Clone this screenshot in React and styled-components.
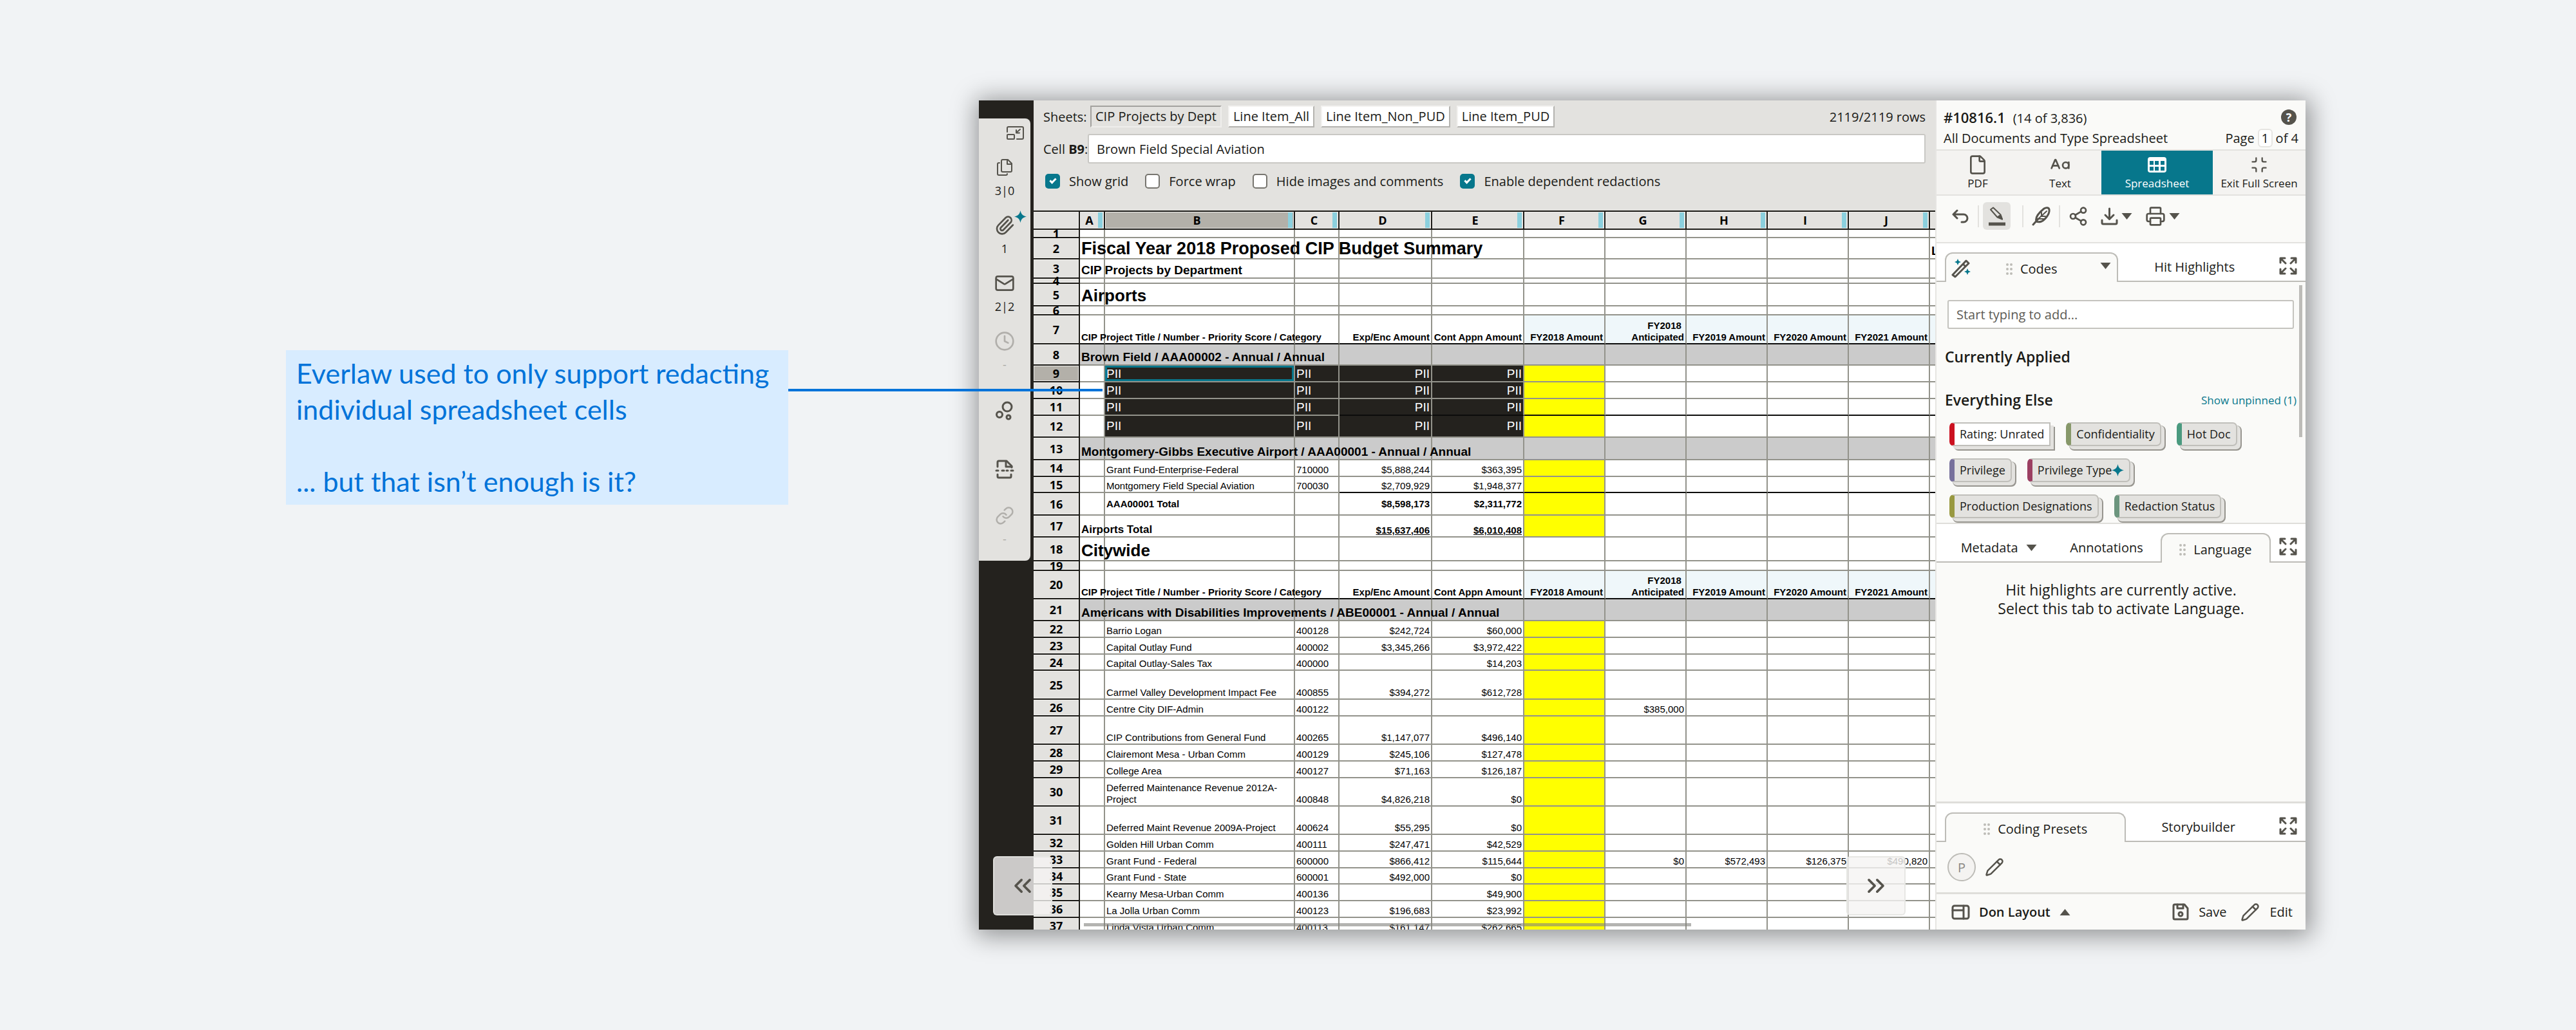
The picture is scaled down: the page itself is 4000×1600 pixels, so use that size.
import React from 'react';
import styled, { createGlobalStyle, css } from 'styled-components';
import {
    CaseSensitive,
    ChevronsLeft,
    ChevronsRight,
    Clock,
    File,
    Link,
    Mail,
    Minimize,
    Paperclip,
    Pencil,
    Printer,
    Share2,
} from 'lucide-react';

const ui = '"Open Sans", "Noto Sans", sans-serif';
const sheetFont = '"Liberation Sans", Arial, sans-serif';

const ink = '#1a1a17';
const iconGrey = '#55534c';
const teal = '#07778c';
const stone = '#e3e2df';
const stoneDark = '#b3b0a9';
const soot = '#24221e';
const paper = '#fafaf8';
const gridLine = '#93938b';

const GlobalStyle = createGlobalStyle`
    *, *::before, *::after {
        box-sizing: border-box;
    }

    body {
        margin: 0;
        background: #f1f3f5;
        color: ${ink};
        font-family: ${ui};
        font-size: 20px;
    }

    button, input {
        font: inherit;
        color: inherit;
    }

    button {
        padding: 0;
        border: 0;
        background: none;
    }
`;

const Page = styled.div`
    display: flex;
    align-items: stretch;
    gap: 296px;
    height: 100vh;
    padding: 156px 420px 156px 444px;
`;

/* ---------- callout ---------- */

const Callout = styled.aside`
    position: relative;
    flex: 0 0 780px;
    align-self: flex-start;
    margin-top: 388px;
    padding: 8px 16px;
    background: #d8ecff;
    color: #0073d9;
    font-family: Lato, sans-serif;
    font-size: 43px;
    font-weight: 400;
    line-height: 56px;

    p {
        margin: 0 0 56px;
    }

    p:last-of-type {
        margin: 0;
    }
`;

const Connector = styled.span`
    position: absolute;
    z-index: 5;
    top: 60px;
    left: 100%;
    width: 488px;
    height: 4px;
    background: #0073d9;
`;

/* ---------- window ---------- */

const Window = styled.main`
    position: relative;
    flex: 1;
    min-width: 0;
    display: flex;
    background: ${soot};
    box-shadow: 2px 4px 36px 6px rgba(0, 0, 0, 0.4);
`;

const Rail = styled.nav`
    flex: 0 0 85px;
    padding-top: 28px;
`;

const RailPanel = styled.div`
    width: 80px;
    height: 687px;
    padding-top: 11px;
    display: flex;
    flex-direction: column;
    background: ${stone};
    border-radius: 0 8px 8px 0;
    color: ${iconGrey};
`;

const RailCollapse = styled.button`
    display: flex;
    align-self: flex-end;
    height: 45px;
    padding-right: 9px;
    color: inherit;
`;

const RailItem = styled.button`
    position: relative;
    display: flex;
    flex-direction: column;
    align-items: center;
    height: 91px;
    padding-top: ${p => (p.$bare ? '18px' : 0)};
    color: inherit;
    font-size: 18px;
    line-height: 32px;

    > svg {
        height: 40px;
        opacity: ${p => (p.$off ? 0.35 : 1)};
    }

    > span {
        color: ${p => (p.$off ? '#a9a8a3' : ink)};
    }
`;

const RailSpark = styled.i`
    position: absolute;
    top: -3px;
    right: 6px;
    display: flex;
`;

/* ---------- sheet ---------- */

const Sheet = styled.section`
    position: relative;
    flex: 1;
    min-width: 0;
    display: flex;
    flex-direction: column;
    overflow: hidden;
    background: #fff;
`;

const SheetHead = styled.header`
    padding: 8px 15px 33px;
    background: ${stone};
`;

const SheetTabs = styled.div`
    display: flex;
    align-items: center;
    gap: 10px;
    height: 34px;
`;

const SheetsLabel = styled.span`
    width: 63px;
`;

const SheetTab = styled.button`
    height: 34px;
    padding: 0 6px;
    border: 2px solid;
    border-color: ${p => (p.$active ? '#a3a29e #efeeec #efeeec #a3a29e' : '#f3f2f0 #b4b3af #b4b3af #f3f2f0')};
    background: ${p => (p.$active ? stone : '#fff')};
    line-height: 28px;
    white-space: nowrap;
`;

const RowCount = styled.span`
    margin-left: auto;
`;

const CellBar = styled.label`
    display: flex;
    align-items: center;
    margin-top: 10px;

    > span {
        width: 69px;
        white-space: nowrap;
    }

    input {
        flex: 1;
        min-width: 0;
        height: 46px;
        padding: 0 12px;
        border: 2px solid #c9c8c4;
        border-radius: 3px;
        background: #fff;
    }
`;

const Options = styled.div`
    display: flex;
    gap: 26px;
    margin-top: 15px;
    margin-bottom: 1px;
    padding-left: 3px;
`;

const Option = styled.label`
    display: flex;
    align-items: center;
    gap: 14px;
    height: 24px;
    white-space: nowrap;

    input {
        appearance: none;
        display: grid;
        place-content: center;
        width: 23px;
        height: 23px;
        margin: 0;
        border: 2px solid #77756f;
        border-radius: 5px;
        background: #fff;
    }

    input:checked {
        border-color: ${teal};
        background: ${teal};
    }

    input:checked::after {
        content: '';
        width: 6px;
        height: 10px;
        margin-bottom: 3px;
        border: solid #fff;
        border-width: 0 3px 3px 0;
        transform: rotate(45deg);
    }
`;

const Grid = styled.div`
    flex: 1;
    min-height: 0;
    overflow: hidden;
`;

const Table = styled.table`
    width: 1518px;
    table-layout: fixed;
    border-collapse: separate;
    border-spacing: 0;
    font-family: ${sheetFont};
    font-size: 15px;
    line-height: 18px;
    color: #000;
`;

const ColHead = styled.th`
    position: relative;
    height: 30px;
    padding: 0 8px 0 0;
    border: solid #1c1b17;
    border-width: 2px 2px 2px 0;
    background: ${p => (p.$active ? stoneDark : stone)};
    box-shadow: inset 0 0 0 1px #efeeec;
    font-family: ${ui};
    font-size: 18px;
    font-weight: 700;
`;

const Grip = styled.span`
    position: absolute;
    top: 1px;
    right: 2px;
    bottom: 1px;
    width: 7px;
    background: #8bd0de;
`;

const RowHead = styled.th`
    padding: 0;
    border: solid #1c1b17;
    border-width: 0 2px 2px 0;
    background: ${p => (p.$active ? stoneDark : stone)};
    box-shadow: inset 0 0 0 1px #efeeec;
    font-family: ${ui};
    font-size: 18px;
    font-weight: 700;
`;

const RowNumber = styled.div`
    display: flex;
    align-items: center;
    justify-content: center;
    height: ${p => p.$h - 2}px;
`;

const fills = {
    head: '#eff7fa',
    group: '#cbcbcb',
    yellow: '#ffff00',
    redacted: soot,
};

const Cell = styled.td`
    padding: 0;
    border: solid ${gridLine};
    border-width: 0 2px 2px 0;
    border-bottom-color: ${p => (p.$rule ? '#0c0c0b' : gridLine)};
    background: ${p => fills[p.$fill] || '#fff'};
    ${p => p.$selected && css`
        box-shadow: inset 0 0 0 3px ${teal};
    `}
`;

const looks = {
    banner: css`font-size: 27px; font-weight: 700; line-height: 30px;`,
    title: css`font-size: 26px; font-weight: 700; line-height: 30px;`,
    sub: css`font-size: 19px; font-weight: 700; line-height: 22px;`,
    total: css`font-size: 17px; font-weight: 700; line-height: 20px;`,
    bold: css`font-weight: 700;`,
    sum: css`font-weight: 700; text-decoration: underline;`,
    pii: css`font-size: 19px; line-height: 22px; color: #fff;`,
};

const CellText = styled.div`
    display: flex;
    align-items: ${p => (p.$middle ? 'center' : 'flex-end')};
    justify-content: ${p => (p.$right ? 'flex-end' : 'flex-start')};
    height: ${p => p.$h - 2}px;
    padding: 0 2px;
    text-align: ${p => (p.$right ? 'right' : 'left')};
    white-space: pre;
    ${p => looks[p.$look]}
`;

const ScrollThumbX = styled.div`
    position: absolute;
    left: 78px;
    bottom: 5px;
    width: 943px;
    height: 5px;
    background: rgba(130, 130, 125, 0.6);
`;

const Pager = styled.button`
    position: absolute;
    z-index: 2;
    bottom: 22px;
    display: flex;
    align-items: center;
    justify-content: center;
    width: 92px;
    height: 92px;
    border: 2px solid rgba(228, 227, 224, 0.8);
    border-radius: 6px;
    background: rgba(245, 244, 242, 0.8);
    color: ${iconGrey};
    ${p => (p.$side === 'left' ? 'left: 22px;' : 'right: 46px;')}
`;

/* ---------- review panel ---------- */

const Review = styled.aside`
    flex: 0 0 575px;
    display: flex;
    flex-direction: column;
    border-left: 2px solid #e6e5e2;
    background: ${paper};
`;

const DocHead = styled.header`
    display: flex;
    flex-direction: column;
    gap: 4px;
    height: 78px;
    padding: 11px 11px 0;
    border-bottom: 2px solid #e3e2df;
`;

const DocLine = styled.div`
    display: flex;
    align-items: center;
    justify-content: space-between;
    height: 29px;
    white-space: nowrap;
`;

const DocTitle = styled.h1`
    margin: 0;
    font-size: 20px;
    font-weight: 400;

    b {
        margin-right: 12px;
        font-size: 22px;
        font-weight: 600;
    }
`;

const Help = styled.button`
    width: 24px;
    height: 24px;
    margin-right: 3px;
    border-radius: 50%;
    background: ${iconGrey};
    color: #fff;
    font-size: 18px;
    font-weight: 700;
    line-height: 24px;
`;

const PageBox = styled.label`
    display: flex;
    align-items: center;
    gap: 5px;

    input {
        width: 23px;
        height: 29px;
        padding: 0;
        border: 2px solid #e6e5e2;
        border-radius: 6px;
        background: #fff;
        text-align: center;
    }
`;

const ViewTabs = styled.div`
    display: grid;
    grid-template-columns: 128fr 128fr 173fr 144fr;
    height: 70px;
    border-bottom: 2px solid #e3e2df;
    background: #f4f3f1;
`;

const ViewTab = styled.button`
    display: flex;
    flex-direction: column;
    align-items: center;
    justify-content: center;
    gap: 1px;
    background: ${p => (p.$active ? teal : 'none')};
    color: ${p => (p.$active ? '#fff' : ink)};
    font-size: 17px;
    line-height: 24px;
    white-space: nowrap;

    svg {
        height: 32px;
        color: ${p => (p.$active ? '#fff' : iconGrey)};
    }
`;

const Tools = styled.div`
    display: flex;
    align-items: center;
    height: 74px;
    padding: 0 15px 9px;
    border-bottom: 2px solid #e3e2df;
    color: ${iconGrey};
`;

const Tool = styled.button`
    display: flex;
    align-items: center;
    justify-content: center;
    gap: 5px;
    height: 43px;
    width: ${p => (p.$menu ? '68px' : '43px')};
    margin-left: ${p => (p.$menu ? '4px' : 0)};
    border-radius: 6px;
    background: ${p => (p.$active ? stone : 'none')};
    color: inherit;
`;

const Divider = styled.i`
    width: 2px;
    height: 34px;
    margin: 0 6px 0 ${p => (p.$wide ? '18px' : '6px')};
    background: ${stone};
`;

const TabBand = styled.div`
    display: flex;
    align-items: flex-end;
    height: 60px;
    padding-left: 13px;
    border-bottom: 2px solid #bdbcb7;
    background: #fff;
`;

const Tab = styled.button`
    position: relative;
    display: flex;
    align-items: center;
    justify-content: center;
    gap: 12px;
    flex: ${p => p.$grow || 1} 1 0;
    height: 46px;
    padding-top: 3px;
    white-space: nowrap;
    ${p => p.$active && css`
        margin-bottom: -2px;
        border: 2px solid #bdbcb7;
        border-bottom: 0;
        border-radius: 12px 12px 0 0;
        background: ${paper};
    `}
`;

const TabLead = styled.span`
    position: absolute;
    left: 8px;
    top: 8px;
    display: flex;
`;

const TabMenu = styled.span`
    position: absolute;
    right: 9px;
    top: 14px;
    display: flex;
`;

const Expand = styled.button`
    display: flex;
    align-items: center;
    justify-content: center;
    flex: 0 0 54px;
    height: 46px;
    color: ${iconGrey};
`;

const Codes = styled.section`
    position: relative;
    padding: 28px 14px 7px 13px;
    border-bottom: 2px solid #dfdeda;
`;

const CodeSearch = styled.input`
    display: block;
    width: calc(100% - 8px);
    height: 45px;
    margin-left: 4px;
    padding: 0 12px;
    border: 2px solid #c4c3be;
    border-radius: 3px;
    background: #fff;

    &::placeholder {
        color: #5d5b55;
        opacity: 1;
    }
`;

const SectionRow = styled.div`
    display: flex;
    align-items: center;
    justify-content: space-between;
    margin-top: ${p => p.$gap}px;

    h2 {
        margin: 0;
        font-size: 23px;
        font-weight: 600;
        line-height: 30px;
    }

    a {
        color: ${teal};
        font-size: 17px;
        text-decoration: none;
    }
`;

const Tags = styled.div`
    display: flex;
    flex-wrap: wrap;
    gap: 19px 24px;
    margin-top: 20px;
    padding: 0 60px 0 7px;
`;

const Tag = styled.button`
    position: relative;
    height: 37px;
    padding: 0 8px;
    border: 2px solid #c0bfba;
    border-left: 8px solid ${p => p.$color};
    border-radius: ${p => (p.$square ? '7px 0 0 7px' : '7px')};
    background: ${p => (p.$square ? '#fff' : stone)};
    box-shadow: ${p => (p.$square ? '5px 5px 0 0 #e3e2df, 7px 7px 0 0 #97958f' : '5px 5px 0 0 #e3e2df, 6px 6px 0 1px #97958f')};
    font-size: 18px;
    line-height: 33px;
    white-space: nowrap;

    svg {
        vertical-align: -3px;
    }
`;

const ScrollThumbY = styled.div`
    position: absolute;
    top: 5px;
    right: 5px;
    width: 5px;
    height: 236px;
    background: #bdbcb8;
`;

const Notice = styled.p`
    flex: 1;
    margin: 0;
    padding-top: 28px;
    border-bottom: 3px solid #dfdeda;
    font-size: 23px;
    line-height: 29px;
    text-align: center;
`;

const Presets = styled.div`
    display: flex;
    align-items: center;
    gap: 14px;
    height: 81px;
    padding: 0 17px;
    border-bottom: 3px solid #dfdeda;
    color: ${iconGrey};
`;

const Preset = styled.button`
    width: 44px;
    height: 44px;
    border: 2px solid #bdbcb7;
    border-radius: 50%;
    background: #f4f3f1;
    color: #8a8882;
`;

const IconButton = styled.button`
    display: flex;
    color: ${iconGrey};
`;

const Footer = styled.footer`
    display: flex;
    align-items: center;
    gap: 22px;
    height: 55px;
    padding: 0 20px 0 23px;
`;

const FootButton = styled.button`
    display: flex;
    align-items: center;
    gap: ${p => (p.$strong ? '14px' : '15px')};
    margin-right: ${p => (p.$strong ? 'auto' : 0)};
    font-weight: ${p => (p.$strong ? 600 : 400)};

    svg {
        color: ${iconGrey};
    }
`;

/* ---------- icons ---------- */

const Svg = ({ w = 28, h = w, box = '0 0 28 28', sw = 3, children }) => (
    <svg width={w} height={h} viewBox={box} fill="none" stroke="currentColor" strokeWidth={sw} strokeLinecap="round" strokeLinejoin="round" aria-hidden="true">
        {children}
    </svg>
);

const Spark = ({ size = 19 }) => (
    <svg width={size} height={size} viewBox="0 0 20 20" fill={teal} aria-hidden="true">
        <path d="M10 0c1.200 6 4 8.800 10 10-6 1.200-8.800 4-10 10-1.200-6-4-8.800-10-10 6-1.200 8.800-4 10-10z" />
    </svg>
);

const Caret = ({ up }) => (
    <svg width="17" height="10" viewBox="0 0 17 10" fill={iconGrey} aria-hidden="true">
        <path d={up ? 'M8.500 0 16.500 10H.5z' : 'M8.500 10 .5 0h16z'} />
    </svg>
);

const Dots = () => (
    <svg width="10" height="18" viewBox="0 0 10 18" fill="#bdbcb7" aria-hidden="true">
        {[2, 9, 16].map(y => (
            <React.Fragment key={y}>
                <circle cx="2" cy={y} r="2" />
                <circle cx="8" cy={y} r="2" />
            </React.Fragment>
        ))}
    </svg>
);

const ExpandIcon = () => (
    <Svg w={28}>
        <path d="M2 9V2h7M2 2l8 8M19 2h7v7M26 2l-8 8M2 19v7h7M2 26l8-8M26 19v7h-7M26 26l-8-8" />
    </Svg>
);

const CollapseIcon = () => (
    <Svg w={29} h={23} box="0 0 29 23" sw={2}>
        <path d="M2 10V4a2 2 0 0 1 2-2h21a2 2 0 0 1 2 2v15a2 2 0 0 1-2 2h-8" />
        <rect x="2" y="14" width="11" height="7" rx="1" />
        <path d="M22 6l-6 5M16 7v4.500h5" />
    </Svg>
);

const CopyIcon = () => (
    <Svg w={26} h={28} box="0 0 26 28" sw={2}>
        <path d="M10 2h8l6 6v11a2 2 0 0 1-2 2H10a2 2 0 0 1-2-2V4a2 2 0 0 1 2-2z" />
        <path d="M17 2v7h7" />
        <path d="M5 7H4a2 2 0 0 0-2 2v15a2 2 0 0 0 2 2h11a2 2 0 0 0 2-2" />
    </Svg>
);

const NodesIcon = () => (
    <Svg w={28} h={30} box="0 0 28 30" sw={3}>
        <circle cx="18" cy="9" r="7" />
        <circle cx="6" cy="21" r="4.500" />
        <circle cx="20" cy="25" r="3" />
    </Svg>
);

const SplitIcon = () => (
    <Svg w={30} h={30} box="0 0 30 30" sw={3}>
        <path d="M4 11V4a2 2 0 0 1 2-2h12l8 8v2" />
        <path d="M17 3v8h9" />
        <path d="M2 17h3M11 17h3M18 17h2M25 17h3" />
        <path d="M4 23v3a2 2 0 0 0 2 2h17a2 2 0 0 0 2-2v-3" />
    </Svg>
);

const TableIcon = () => (
    <svg width="29" height="24" viewBox="0 0 29 24" aria-hidden="true">
        <rect width="29" height="24" rx="4" fill="#fff" />
        {[3, 11, 20].map(x => (
            <React.Fragment key={x}>
                <rect x={x} y="6" width="6" height="6" fill={teal} />
                <rect x={x} y="15" width="6" height="6" fill={teal} />
            </React.Fragment>
        ))}
    </svg>
);

const UndoIcon = () => (
    <Svg w={26} h={22} box="0 0 26 22">
        <path d="M8 2 2 8l6 6M2 8h16a6 6 0 0 1 0 12h-3" />
    </Svg>
);

const HighlightIcon = () => (
    <Svg w={30} h={30} box="0 0 30 30" sw={2}>
        <path d="M5 4.500 9 1.500l11.500 11 2.500 7-7.500-3z" />
        <path d="M16.500 15.500l4-2.500 2.500 6.500z" fill="currentColor" />
        <path d="M2 27h26" strokeWidth="5" strokeLinecap="butt" />
    </Svg>
);

const NibIcon = () => (
    <Svg w={30} h={30} box="0 0 30 30" sw={3}>
        <path d="M2 28l8-9M7 23c-2-6 2-12 12-20 3-2 8-2 8 2 1 6-6 15-12 18-3 1-6 1-8 0z" />
        <path d="M9 20 23 7M14 15h7M11 19h7M15 14V9" strokeWidth="2" />
    </Svg>
);

const DownloadIcon = () => (
    <Svg w={27} h={28} box="0 0 27 28">
        <path d="M13.500 2v16M7 12l6.500 6.500L20 12M2 20v4a2 2 0 0 0 2 2h19a2 2 0 0 0 2-2v-4" />
    </Svg>
);

const WandIcon = () => (
    <svg width="30" height="30" viewBox="0 0 30 30" fill="none" stroke={iconGrey} strokeWidth="3" strokeLinejoin="round" aria-hidden="true">
        <path d="M2 25 23 3l4 4L6 28z" />
        <path d="M18 8l4 4" />
        <path d="M10 0l1.500 3.500L15 5l-3.500 1.500L10 10 8.500 6.500 5 5l3.500-1.500zM25 15l1.500 3.500L30 20l-3.500 1.500L25 25l-1.500-3.500L20 20l3.500-1.500z" fill={teal} stroke="none" />
    </svg>
);

const LayoutIcon = () => (
    <Svg w={29} h={24} box="0 0 29 24" sw={3}>
        <rect x="2" y="2" width="25" height="20" rx="3" />
        <path d="M2 9h17M19 2v20" />
    </Svg>
);

const SaveIcon = () => (
    <Svg w={26} h={27} box="0 0 26 27" sw={3}>
        <path d="M4 2h15l5 6v15a2 2 0 0 1-2 2H4a2 2 0 0 1-2-2V4a2 2 0 0 1 2-2z" />
        <path d="M8 2v6h9V2" />
        <circle cx="13" cy="17" r="3" />
    </Svg>
);

/* ---------- data ---------- */

const columns = [
    ['A', 39], ['B', 295], ['C', 69], ['D', 144], ['E', 143], ['F', 126],
    ['G', 126], ['H', 126], ['I', 126], ['J', 126], ['K', 126],
];

const amounts = {
    A: 'CIP Project Title / Number - Priority Score / Category',
    D: 'Exp/Enc Amount',
    E: 'Cont Appn Amount',
    F: 'FY2018 Amount',
    G: 'FY2018 \nAnticipated',
    H: 'FY2019 Amount',
    I: 'FY2020 Amount',
    J: 'FY2021 Amount',
};

const pii = { B: 'PII', C: 'PII', D: 'PII', E: 'PII' };

const item = (h, B, C, D, E, rest) => ({ h, kind: 'item', cells: { B, C, D, E, ...rest } });

const rows = [
    { h: 13, cells: {} },
    { h: 33, look: 'banner', cells: { A: 'Fiscal Year 2018 Proposed CIP Budget Summary', K: 'L' } },
    { h: 30, look: 'sub', cells: { A: 'CIP Projects by Department' } },
    { h: 8, cells: {} },
    { h: 35, look: 'title', cells: { A: 'Airports' } },
    { h: 14, cells: {} },
    { h: 45, kind: 'head', look: 'bold', rule: 'A', cells: amounts },
    { h: 33, kind: 'group', look: 'sub', cells: { A: 'Brown Field / AAA00002 - Annual / Annual' } },
    { h: 26, kind: 'redacted', look: 'pii', cells: pii },
    { h: 26, kind: 'redacted', look: 'pii', cells: pii },
    { h: 26, kind: 'redacted', look: 'pii', rule: 'D', cells: pii },
    { h: 34, kind: 'redacted', look: 'pii', middle: true, cells: pii },
    { h: 35, kind: 'group', look: 'sub', cells: { A: 'Montgomery-Gibbs Executive Airport / AAA00001 - Annual / Annual' } },
    item(26, 'Grant Fund-Enterprise-Federal', '710000', '$5,888,244', '$363,395'),
    { ...item(25, 'Montgomery Field Special Aviation', '700030', '$2,709,929', '$1,948,377'), rule: 'D' },
    { h: 35, kind: 'item', look: 'bold', middle: true, cells: { B: 'AAA00001 Total', D: '$8,598,173', E: '$2,311,772' } },
    { h: 34, kind: 'item', look: 'sum', cells: { A: 'Airports Total', D: '$15,637,406', E: '$6,010,408' } },
    { h: 37, look: 'title', cells: { A: 'Citywide' } },
    { h: 15, cells: {} },
    { h: 44, kind: 'head', look: 'bold', rule: 'A', cells: amounts },
    { h: 34, kind: 'group', look: 'sub', cells: { A: 'Americans with Disabilities Improvements / ABE00001 - Annual / Annual' } },
    item(26, 'Barrio Logan', '400128', '$242,724', '$60,000'),
    item(26, 'Capital Outlay Fund', '400002', '$3,345,266', '$3,972,422'),
    item(25, 'Capital Outlay-Sales Tax', '400000', '', '$14,203'),
    item(45, 'Carmel Valley Development Impact Fee', '400855', '$394,272', '$612,728'),
    item(26, 'Centre City DIF-Admin', '400122', '', '', { G: '$385,000' }),
    item(44, 'CIP Contributions from General Fund', '400265', '$1,147,077', '$496,140'),
    item(26, 'Clairemont Mesa - Urban Comm', '400129', '$245,106', '$127,478'),
    item(26, 'College Area', '400127', '$71,163', '$126,187'),
    item(44, 'Deferred Maintenance Revenue 2012A-\nProject', '400848', '$4,826,218', '$0'),
    item(44, 'Deferred Maint Revenue 2009A-Project', '400624', '$55,295', '$0'),
    item(26, 'Golden Hill Urban Comm', '400111', '$247,471', '$42,529'),
    item(26, 'Grant Fund - Federal', '600000', '$866,412', '$115,644', { G: '$0', H: '$572,493', I: '$126,375', J: '$490,820' }),
    item(25, 'Grant Fund - State', '600001', '$492,000', '$0'),
    item(26, 'Kearny Mesa-Urban Comm', '400136', '', '$49,900'),
    item(26, 'La Jolla Urban Comm', '400123', '$196,683', '$23,992'),
    item(26, 'Linda Vista Urban Comm', '400113', '$161,147', '$262,665'),
];

const fillFor = (kind, col) => {
    if (kind === 'group') return 'group';
    if (kind === 'head' && col >= 'F') return 'head';
    if (kind === 'redacted' && col >= 'B' && col <= 'E') return 'redacted';
    if ((kind === 'redacted' || kind === 'item') && col === 'F') return 'yellow';
    return 'plain';
};

const lookFor = (row, col) => {
    if (row.look === 'sum' && col === 'A') return 'total';
    if (row.look === 'banner' && col === 'K') return 'sub';
    return row.look;
};

const sheets = ['CIP Projects by Dept', 'Line Item_All', 'Line Item_Non_PUD', 'Line Item_PUD'];

const options = [
    ['Show grid', true],
    ['Force wrap', false],
    ['Hide images and comments', false],
    ['Enable dependent redactions', true],
];

const tags = [
    ['Rating: Unrated', '#cb1120'],
    ['Confidentiality', '#87986a'],
    ['Hot Doc', '#4a9a7f'],
    ['Privilege', '#77709c'],
    ['Privilege Type', '#9b3f62'],
    ['Production Designations', '#989840'],
    ['Redaction Status', '#6c957e'],
];

/* ---------- page parts ---------- */

const SideRail = () => (
    <Rail aria-label="Document context">
        <RailPanel>
            <RailCollapse aria-label="Collapse"><CollapseIcon /></RailCollapse>
            <RailItem><CopyIcon /><span>3|0</span></RailItem>
            <RailItem>
                <Paperclip size={32} />
                <RailSpark><Spark /></RailSpark>
                <span>1</span>
            </RailItem>
            <RailItem><Mail size={32} /><span>2|2</span></RailItem>
            <RailItem $off><Clock size={32} /><span>-</span></RailItem>
            <RailItem $bare aria-label="Related"><NodesIcon /></RailItem>
            <RailItem $bare aria-label="Split"><SplitIcon /></RailItem>
            <RailItem $off><Link size={30} /><span>-</span></RailItem>
        </RailPanel>
    </Rail>
);

const SheetTable = () => (
    <Table>
        <colgroup>
            <col style={{ width: 72 }} />
            {columns.map(([name, width]) => <col key={name} style={{ width }} />)}
        </colgroup>
        <thead>
            <tr>
                <ColHead />
                {columns.map(([name]) => (
                    <ColHead key={name} scope="col" $active={name === 'B'}>
                        {name !== 'K' && name}
                        <Grip />
                    </ColHead>
                ))}
            </tr>
        </thead>
        <tbody>
            {rows.map((row, i) => (
                <tr key={i}>
                    <RowHead scope="row" $active={i === 8}>
                        <RowNumber $h={row.h}>{i + 1}</RowNumber>
                    </RowHead>
                    {columns.map(([col]) => (
                        <Cell
                            key={col}
                            $fill={fillFor(row.kind, col)}
                            $rule={row.rule && col >= row.rule}
                            $selected={i === 8 && col === 'B'}
                        >
                            <CellText
                                $h={row.h}
                                $look={lookFor(row, col)}
                                $middle={row.middle}
                                $right={col >= 'D' && row.look !== 'banner'}
                            >
                                {row.cells[col]}
                            </CellText>
                        </Cell>
                    ))}
                </tr>
            ))}
        </tbody>
    </Table>
);

const SheetView = () => (
    <Sheet>
        <SheetHead>
            <SheetTabs>
                <SheetsLabel>Sheets:</SheetsLabel>
                {sheets.map((name, i) => <SheetTab key={name} $active={i === 0}>{name}</SheetTab>)}
                <RowCount>2119/2119 rows</RowCount>
            </SheetTabs>
            <CellBar>
                <span>Cell <b>B9</b>:</span>
                <input type="text" defaultValue="Brown Field Special Aviation" />
            </CellBar>
            <Options>
                {options.map(([label, checked]) => (
                    <Option key={label}>
                        <input type="checkbox" defaultChecked={checked} />
                        {label}
                    </Option>
                ))}
            </Options>
        </SheetHead>
        <Grid>
            <SheetTable />
        </Grid>
        <ScrollThumbX />
        <Pager $side="right" aria-label="Next document"><ChevronsRight size={44} /></Pager>
    </Sheet>
);

const ReviewPanel = () => (
    <Review>
        <DocHead>
            <DocLine>
                <DocTitle><b>#10816.1</b>(14 of 3,836)</DocTitle>
                <Help aria-label="Help">?</Help>
            </DocLine>
            <DocLine>
                <span>All Documents and Type Spreadsheet</span>
                <PageBox>
                    Page
                    <input type="text" defaultValue="1" />
                    of 4
                </PageBox>
            </DocLine>
        </DocHead>
        <ViewTabs>
            <ViewTab><File size={32} />PDF</ViewTab>
            <ViewTab><CaseSensitive size={36} />Text</ViewTab>
            <ViewTab $active><TableIcon />Spreadsheet</ViewTab>
            <ViewTab><Minimize size={28} />Exit Full Screen</ViewTab>
        </ViewTabs>
        <Tools>
            <Tool aria-label="Undo"><UndoIcon /></Tool>
            <Divider />
            <Tool $active aria-label="Redact"><HighlightIcon /></Tool>
            <Divider $wide />
            <Tool aria-label="Sign"><NibIcon /></Tool>
            <Divider />
            <Tool aria-label="Share"><Share2 size={32} /></Tool>
            <Tool $menu aria-label="Download"><DownloadIcon /><Caret /></Tool>
            <Tool $menu aria-label="Print"><Printer size={32} /><Caret /></Tool>
        </Tools>

        <TabBand>
            <Tab $active $grow={267}>
                <TabLead><WandIcon /></TabLead>
                <Dots />Codes
                <TabMenu><Caret /></TabMenu>
            </Tab>
            <Tab $grow={238}>Hit Highlights</Tab>
            <Expand aria-label="Expand codes"><ExpandIcon /></Expand>
        </TabBand>
        <Codes>
            <CodeSearch type="text" placeholder="Start typing to add..." aria-label="Add a code" />
            <SectionRow $gap={28}><h2>Currently Applied</h2></SectionRow>
            <SectionRow $gap={37}>
                <h2>Everything Else</h2>
                <a href="#unpinned">Show unpinned (1)</a>
            </SectionRow>
            <Tags>
                {tags.map(([name, color], i) => (
                    <Tag key={name} $color={color} $square={i === 0}>
                        {name}
                        {name === 'Privilege Type' && <Spark />}
                    </Tag>
                ))}
            </Tags>
            <ScrollThumbY />
        </Codes>

        <TabBand>
            <Tab>Metadata <Caret /></Tab>
            <Tab>Annotations</Tab>
            <Tab $active><Dots />Language</Tab>
            <Expand aria-label="Expand language"><ExpandIcon /></Expand>
        </TabBand>
        <Notice>
            Hit highlights are currently active.<br />
            Select this tab to activate Language.
        </Notice>

        <TabBand>
            <Tab $active $grow={279}><Dots />Coding Presets</Tab>
            <Tab $grow={226}>Storybuilder</Tab>
            <Expand aria-label="Expand presets"><ExpandIcon /></Expand>
        </TabBand>
        <Presets>
            <Preset>P</Preset>
            <IconButton aria-label="Edit presets"><Pencil size={30} /></IconButton>
        </Presets>
        <Footer>
            <FootButton $strong><LayoutIcon />Don Layout<Caret up /></FootButton>
            <FootButton><SaveIcon />Save</FootButton>
            <FootButton><Pencil size={30} />Edit</FootButton>
        </Footer>
    </Review>
);

const App = () => (
    <>
        <GlobalStyle />
        <Page>
            <Callout>
                <p>Everlaw used to only support redacting individual spreadsheet cells</p>
                <p>... but that isn’t enough is it?</p>
                <Connector />
            </Callout>
            <Window>
                <SideRail />
                <SheetView />
                <ReviewPanel />
                <Pager $side="left" aria-label="Previous document"><ChevronsLeft size={44} /></Pager>
            </Window>
        </Page>
    </>
);

export default App;
